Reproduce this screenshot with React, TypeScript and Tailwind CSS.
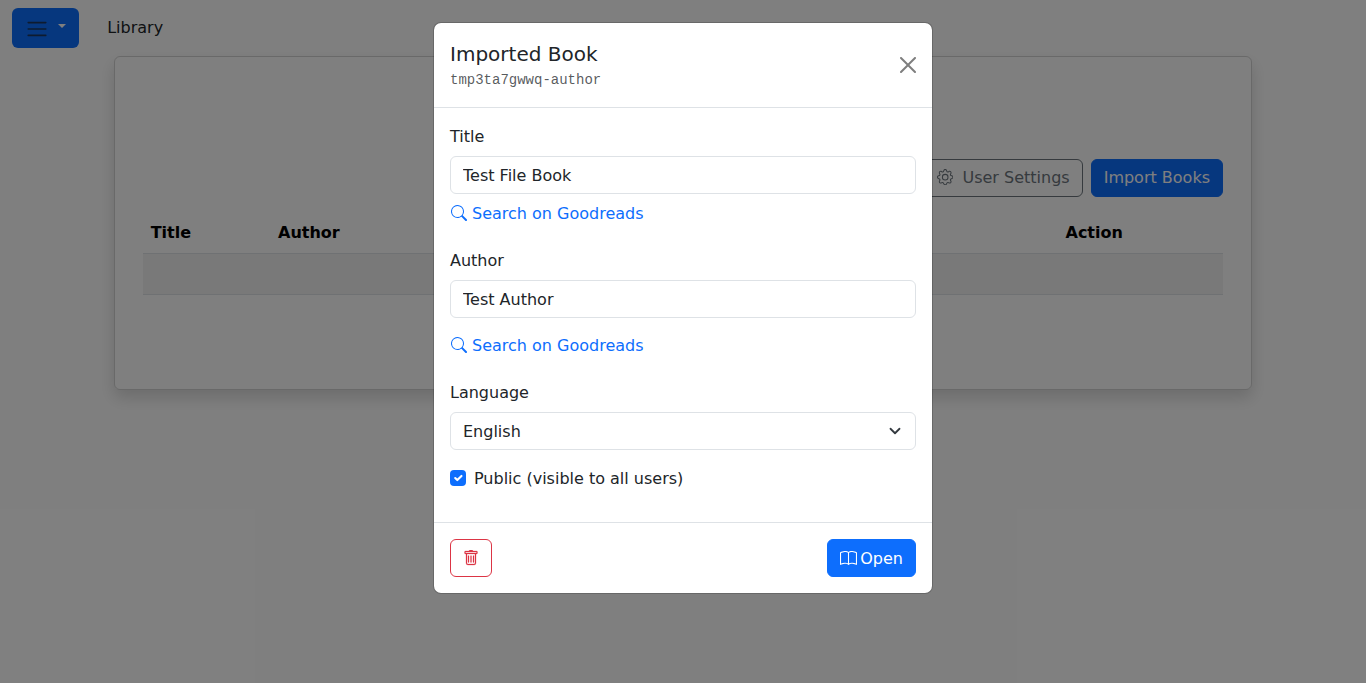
import type { ReactNode } from "react";
import { BsBook, BsGear, BsSearch, BsTrash } from "react-icons/bs";

function TopBar() {
  return (
    <nav className="flex h-14 items-center px-3">
      <button className="flex h-10 w-[67px] items-center rounded-md bg-[#0d6efd] pl-[13px] text-white">
        <svg width="24" height="24" viewBox="0 0 30 30" fill="none" className="mt-0.5">
          <path
            stroke="rgba(33,37,41,.75)"
            strokeLinecap="round"
            strokeMiterlimit="10"
            strokeWidth="2"
            d="M4 7h22M4 15h22M4 23h22"
          />
        </svg>
        <span className="mb-1 ml-[9px] border-x-[4.8px] border-t-[4.8px] border-x-transparent border-t-white" />
      </button>
      <span className="ml-[28.2px]">Library</span>
    </nav>
  );
}

function LibraryCard() {
  return (
    <main className="mx-auto flex h-[334px] w-[1138px] flex-col rounded-md border border-black/[.175] px-7 pt-[102px] shadow-[0_8px_16px_rgba(0,0,0,.15)]">
      <div className="flex justify-end gap-2">
        <button className="flex h-[38px] items-center rounded-md border border-[#6c757d] px-3 text-[#6c757d]">
          <BsGear className="mr-[9px] mb-0.5 size-[16.4px]" />
          User Settings
        </button>
        <button className="h-[38px] rounded-md border border-[#0d6efd] bg-[#0d6efd] px-3 text-white">
          Import Books
        </button>
      </div>
      <table className="mt-[15px] w-full table-fixed border-collapse text-left text-black">
        <colgroup>
          <col className="w-[127px]" />
          <col className="w-[787px]" />
          <col />
        </colgroup>
        <thead>
          <tr className="h-[41px] border-b border-[#dee2e6]">
            <th className="pt-0.5 pr-2 pl-[7.7px] font-bold">Title</th>
            <th className="px-2 pt-0.5 font-bold">Author</th>
            <th className="pt-0.5 pr-2 pl-[8.5px] font-bold">Action</th>
          </tr>
        </thead>
        <tbody>
          <tr className="h-[41px] border-b border-[#dee2e6] bg-black/5">
            <td colSpan={3} />
          </tr>
        </tbody>
      </table>
    </main>
  );
}

function GoodreadsLink() {
  return (
    <a href="#" className="flex h-6 items-center text-[#0d6efd]">
      <BsSearch className="mr-[5px] mb-0.5 ml-px" />
      Search on Goodreads
    </a>
  );
}

function Field({ label, children }: { label: string; children: ReactNode }) {
  return (
    <label className="flex flex-col gap-[7px]">
      <span>{label}</span>
      {children}
    </label>
  );
}

function BookDialog() {
  return (
    <div
      role="dialog"
      className="flex h-[572px] w-[500px] flex-col rounded-lg border border-black/[.175] bg-white bg-clip-padding"
    >
      <header className="flex h-[85px] shrink-0 items-center justify-between border-b border-[#dee2e6] p-4">
        <div>
          <h5 className="text-xl leading-[30px] font-medium">Imported Book</h5>
          <div className="h-[22px] pt-px font-['Liberation_Mono',monospace] text-sm leading-[21px] text-[#212529]/75">
            tmp3ta7gwwq-author
          </div>
        </div>
        <button aria-label="Close" className="opacity-50">
          <svg width="16" height="16" viewBox="0 0 16 16" fill="#000">
            <path d="M.293.293a1 1 0 0 1 1.414 0L8 6.586 14.293.293a1 1 0 1 1 1.414 1.414L9.414 8l6.293 6.293a1 1 0 0 1-1.414 1.414L8 9.414l-6.293 6.293a1 1 0 0 1-1.414-1.414L6.586 8 .293 1.707a1 1 0 0 1 0-1.414z" />
          </svg>
        </button>
      </header>
      <div className="flex-1 px-4 pt-[17px]">
        <Field label="Title">
          <input
            defaultValue="Test File Book"
            className="h-[38px] rounded-md border border-[#dee2e6] px-3"
          />
        </Field>
        <div className="mt-2 mb-[23px]">
          <GoodreadsLink />
        </div>
        <Field label="Author">
          <input
            defaultValue="Test Author"
            className="h-[38px] rounded-md border border-[#dee2e6] px-3"
          />
        </Field>
        <div className="mt-4 mb-[23px]">
          <GoodreadsLink />
        </div>
        <Field label="Language">
          <span className="flex h-[38px] items-center justify-between rounded-md border border-[#dee2e6] px-3">
            <span className="pt-0.5">English</span>
            <svg width="16" height="12" viewBox="0 0 16 16" fill="none" stroke="#343a40" strokeWidth="2.4">
              <path strokeLinecap="round" strokeLinejoin="round" d="m2 5 6 6 6-6" />
            </svg>
          </span>
        </Field>
        <div className="mt-[17px] flex h-6 items-center gap-2">
          <span
            role="checkbox"
            aria-checked="true"
            className="mb-0.5 flex size-4 items-center justify-center rounded bg-[#0d6efd]"
          >
            <svg width="14" height="14" viewBox="0 0 20 20" fill="none" stroke="#fff" strokeWidth="3">
              <path strokeLinecap="round" strokeLinejoin="round" d="m6 10 3 3 6-6" />
            </svg>
          </span>
          Public (visible to all users)
        </div>
      </div>
      <footer className="flex shrink-0 items-center justify-between border-t border-[#dee2e6] p-4">
        <button
          aria-label="Delete"
          className="flex h-[38px] w-[42px] items-center justify-center rounded-md border border-[#dc3545] text-[#dc3545]"
        >
          <BsTrash className="stroke-current stroke-[0.25]" />
        </button>
        <button className="flex h-[38px] items-center rounded-md border border-[#0d6efd] bg-[#0d6efd] px-3 text-white">
          <BsBook className="mr-[3px] size-[17px]" />
          <span className="pt-0.5">Open</span>
        </button>
      </footer>
    </div>
  );
}

export default function App() {
  return (
    <div className="relative h-[683px] overflow-hidden bg-white font-['DejaVu_Sans',sans-serif] text-base text-[#212529]">
      <TopBar />
      <LibraryCard />
      <div className="absolute inset-0 flex items-start justify-center bg-black/50 pt-[22px]">
        <BookDialog />
      </div>
    </div>
  );
}
